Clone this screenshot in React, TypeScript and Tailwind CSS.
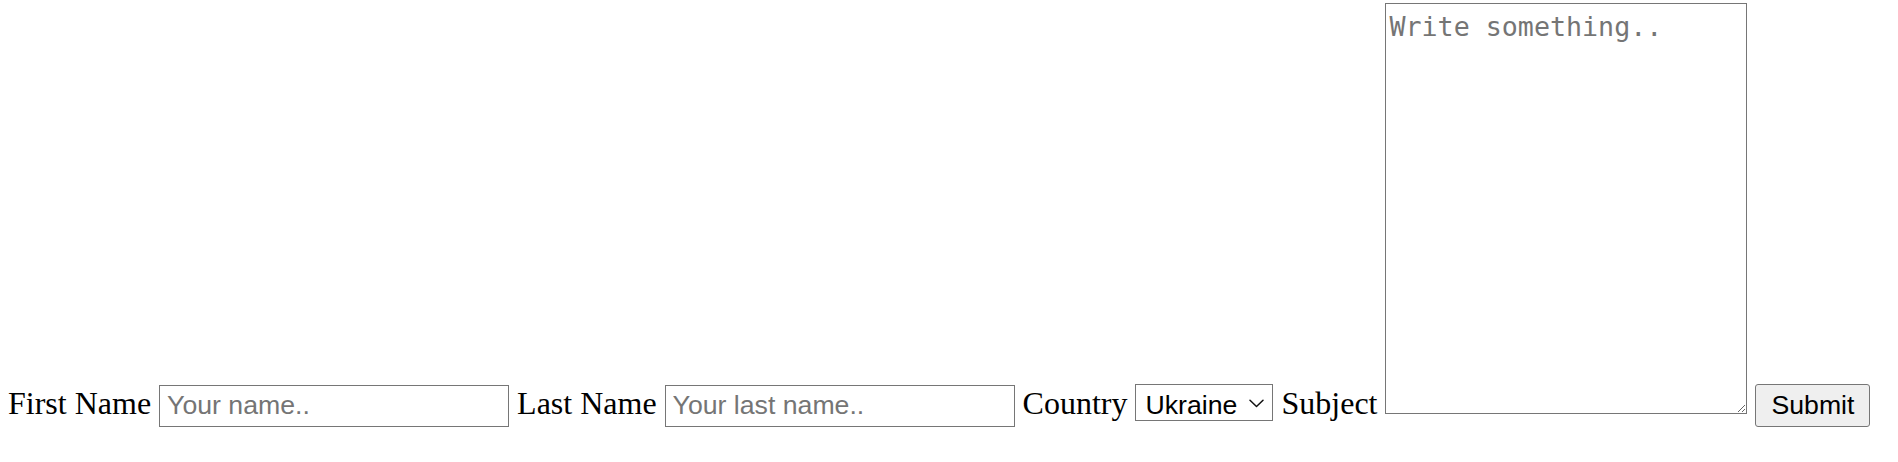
export default function App() {
  const inputCls =
    "w-[350px] h-[42px] border border-[#767676] bg-white px-[7px] font-['Liberation_Sans',Arial,sans-serif] text-[26.67px] leading-normal text-black placeholder:text-[#757575] align-baseline outline-none";
  return (
    <div className="pl-2 pt-[3px] bg-white font-['Liberation_Serif','Times_New_Roman',serif] text-[32px] leading-normal text-black">
      <form>
        <label htmlFor="fname">First Name</label>{" "}
        <input id="fname" type="text" className={inputCls} placeholder="Your name.." />{" "}
        <label htmlFor="lname">Last Name</label>{" "}
        <input id="lname" type="text" className={inputCls} placeholder="Your last name.." />{" "}
        <label htmlFor="country">Country</label>{" "}
        <span className="relative inline-flex align-baseline">
          <select
            id="country"
            defaultValue="ukraine"
            className="appearance-none w-[138px] h-[37px] border border-[#767676] bg-white pl-[9px] pr-[30px] font-['Liberation_Sans',Arial,sans-serif] text-[26.67px] leading-normal text-black outline-none"
          >
            <option value="ukraine">Ukraine</option>
            <option value="poland">Poland</option>
            <option value="usa">USA</option>
          </select>
          <svg
            className="pointer-events-none absolute right-[9px] top-[15px]"
            width="15"
            height="9"
            viewBox="0 0 15 9"
            fill="none"
          >
            <path d="M1 1.2 L7.5 7.5 L14 1.2" stroke="#111" strokeWidth="1.5" strokeLinecap="round" strokeLinejoin="round" />
          </svg>
        </span>{" "}
        <label htmlFor="subject">Subject</label>{" "}
        <textarea
          id="subject"
          className="w-[362px] h-[411px] border border-[#767676] bg-white p-[3px] font-['DejaVu_Sans_Mono',monospace] text-[26.67px] leading-normal text-black placeholder:text-[#757575] align-baseline resize outline-none"
          placeholder="Write something.."
        />{" "}
        <button
          type="button"
          className="w-[115px] h-[43px] border border-[#767676] bg-[#efefef] rounded-[3px] font-['Liberation_Sans',Arial,sans-serif] text-[26.67px] leading-normal text-black align-baseline"
        >
          Submit
        </button>
      </form>
    </div>
  );
}
